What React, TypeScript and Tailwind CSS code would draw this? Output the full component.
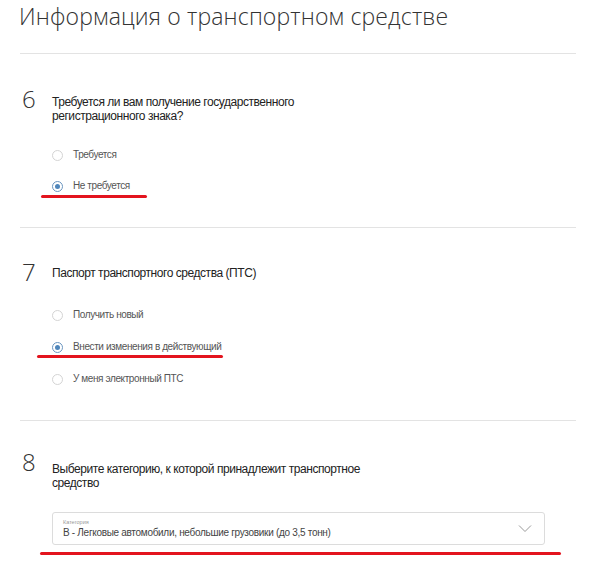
import React from "react";

function Radio({ checked, label, mark }: { checked?: boolean; label: string; mark?: string }) {
  return (
    <div className="relative flex items-center h-[16px]">
      <span
        className={
          checked
            ? "w-[11px] h-[11px] rounded-full border border-[#6a95bf] flex items-center justify-center"
            : "w-[11px] h-[11px] rounded-full border border-[#d4d4d4]"
        }
      >
        {checked ? <span className="w-[5px] h-[5px] rounded-full bg-[#4f86bb]" /> : null}
      </span>
      <span className="ml-[10px] text-[10px] tracking-[-0.4px] text-[#555] leading-none">{label}</span>
      {mark ? <span className={mark} /> : null}
    </div>
  );
}

function Divider() {
  return <div className="ml-[20px] w-[556px] h-px bg-[#e3e3e3]" />;
}

function Num({ n }: { n: string }) {
  return (
    <div className="w-[32px] -mt-[4px] text-[24px] font-light leading-none text-[#333] pl-[2px]" style={{ fontFamily: "'Open Sans', sans-serif" }}>
      {n}
    </div>
  );
}

export default function App() {
  return (
    <div className="w-[600px] h-[569px] bg-white overflow-hidden" style={{ fontFamily: "'Liberation Sans', Arial, sans-serif" }}>
      <h1
        className="pl-[19px] pt-[2px] h-[53px] text-[23px] font-light text-[#333] leading-[28px] tracking-[0.15px]"
        style={{ fontFamily: "'Open Sans', sans-serif" }}
      >
        Информация о транспортном средстве
      </h1>
      <Divider />

      {/* Section 6 */}
      <div className="flex pl-[20px] pt-[37px] h-[173px]">
        <Num n="6" />
        <div className="flex flex-col">
          <div className="text-[12px] tracking-[-0.45px] leading-[14px] text-[#222] pt-[4px] w-[300px]">
            Требуется ли вам получение государственного
            <br />
            регистрационного знака?
          </div>
          <div className="flex flex-col gap-[15px] pt-[24px]">
            <Radio label="Требуется" />
            <Radio
              checked
              label="Не требуется"
              mark="absolute left-[-11px] top-[17px] w-[106px] h-[3px] rounded-full bg-[#e3141e]"
            />
          </div>
        </div>
      </div>
      <Divider />

      {/* Section 7 */}
      <div className="flex pl-[20px] pt-[36px] h-[192px]">
        <Num n="7" />
        <div className="flex flex-col">
          <div className="text-[12px] tracking-[-0.45px] leading-[14px] text-[#222] pt-[2px]">
            Паспорт транспортного средства (ПТС)
          </div>
          <div className="flex flex-col gap-[16px] pt-[27px]">
            <Radio label="Получить новый" />
            <Radio
              checked
              label="Внести изменения в действующий"
              mark="absolute left-[-15px] top-[16px] w-[186px] h-[3px] rounded-full bg-[#e3141e]"
            />
            <Radio label="У меня электронный ПТС" />
          </div>
        </div>
      </div>
      <Divider />

      {/* Section 8 */}
      <div className="flex pl-[20px] pt-[33px]">
        <Num n="8" />
        <div className="flex flex-col">
          <div className="text-[12px] tracking-[-0.45px] leading-[14px] text-[#222] pt-[8px] w-[330px]">
            Выберите категорию, к которой принадлежит транспортное
            <br />
            средство
          </div>
          <div className="relative mt-[22px] w-[493px] h-[33px] rounded-[3px] border border-[#dcdcdc] flex items-center pl-[10px] pr-[12px]">
            <div className="flex flex-col">
              <span className="text-[5.5px] leading-[7px] text-[#999]">Категория</span>
              <span className="text-[10px] tracking-[-0.3px] leading-[12px] text-[#444] mt-[1px]">
                B - Легковые автомобили, небольшие грузовики (до 3,5 тонн)
              </span>
            </div>
            <svg className="ml-auto" width="14" height="9" viewBox="0 0 14 9" fill="none">
              <path d="M1 1.5 L7 7.5 L13 1.5" stroke="#9a9a9a" strokeWidth="1" />
            </svg>
            <span className="absolute left-[-13px] top-[39px] w-[521px] h-[3px] rounded-full bg-[#e3141e]" />
          </div>
        </div>
      </div>
    </div>
  );
}
